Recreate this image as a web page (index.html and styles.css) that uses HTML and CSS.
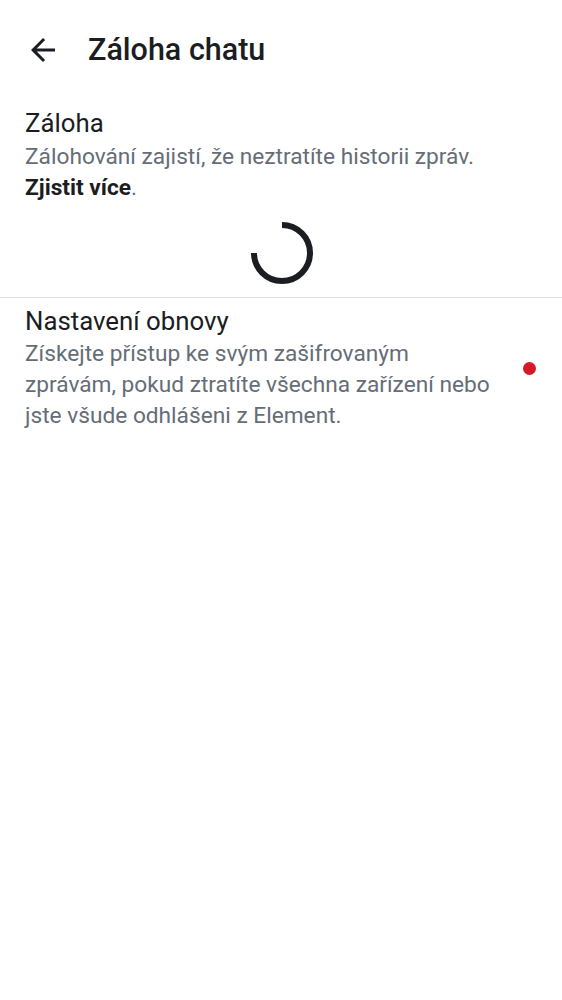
FILE: index.html
```html
<!DOCTYPE html>
<html lang="cs">
<head>
<meta charset="utf-8">
<title>Záloha chatu</title>
<link rel="stylesheet" href="styles.css">
</head>
<body>
<header class="toolbar">
  <button class="back" aria-label="Zpět">
    <svg width="36" height="36" viewBox="0 0 24 24"><path d="M20 11H7.83l5.59-5.59L12 4l-8 8 8 8 1.41-1.41L7.83 13H20v-2z" fill="#1b1d22"/></svg>
  </button>
  <h1 class="title">Záloha chatu</h1>
</header>
<main>
  <section class="pref">
    <div class="pref-text">
      <div class="pref-title">Záloha</div>
      <div class="pref-summary">Zálohování zajistí, že neztratíte historii zpráv. <b class="link">Zjistit více</b>.</div>
    </div>
  </section>
  <div class="spinner-row">
    <svg class="spinner" width="62" height="62" viewBox="0 0 62 62"><path d="M31 3 A28 28 0 1 1 3 31" fill="none" stroke="#1b1d22" stroke-width="6"/></svg>
  </div>
  <hr class="divider">
  <section class="pref pref-row">
    <div class="pref-text narrow">
      <div class="pref-title">Nastavení obnovy</div>
      <div class="pref-summary">Získejte přístup ke svým zašifrovaným zprávám, pokud ztratíte všechna zařízení nebo jste všude odhlášeni z Element.</div>
    </div>
    <span class="dot"></span>
  </section>
</main>
</body>
</html>
```
FILE: styles.css
```css
* { box-sizing: border-box; }
body {
  margin: 0;
  background: #ffffff;
  font-family: Roboto, "Noto Sans", sans-serif;
  color: #1b1d22;
}
.toolbar {
  height: 100px;
  display: flex;
  align-items: center;
  padding-left: 25px;
}
.back {
  width: 36px;
  height: 36px;
  padding: 0;
  border: 0;
  background: none;
  display: flex;
}
.title {
  margin: 0 0 0 27px;
  font-size: 30.5px;
  font-weight: 500;
  line-height: 36px;
}
.pref {
  padding: 8px 26px 0 25px;
}
.pref-title {
  font-size: 25.8px;
  line-height: 30px;
}
.pref-summary {
  margin-top: 2.5px;
  font-size: 22.7px;
  line-height: 31px;
  color: #656d77;
}
.link {
  color: #1b1d22;
  font-weight: 700;
}
.spinner-row {
  display: flex;
  justify-content: center;
  padding: 19px 0 13px 0;
}
.spinner { display: block; margin-left: 1px; }
.divider {
  margin: 0;
  border: 0;
  height: 1px;
  background: #e1e1e1;
}
.pref-row {
  display: flex;
  align-items: center;
}
.narrow {
  flex: 1;
  min-width: 0;
}
.dot {
  width: 13px;
  height: 13px;
  border-radius: 50%;
  background: #d51928;
  flex: none;
  margin-left: 26px;
}
```
